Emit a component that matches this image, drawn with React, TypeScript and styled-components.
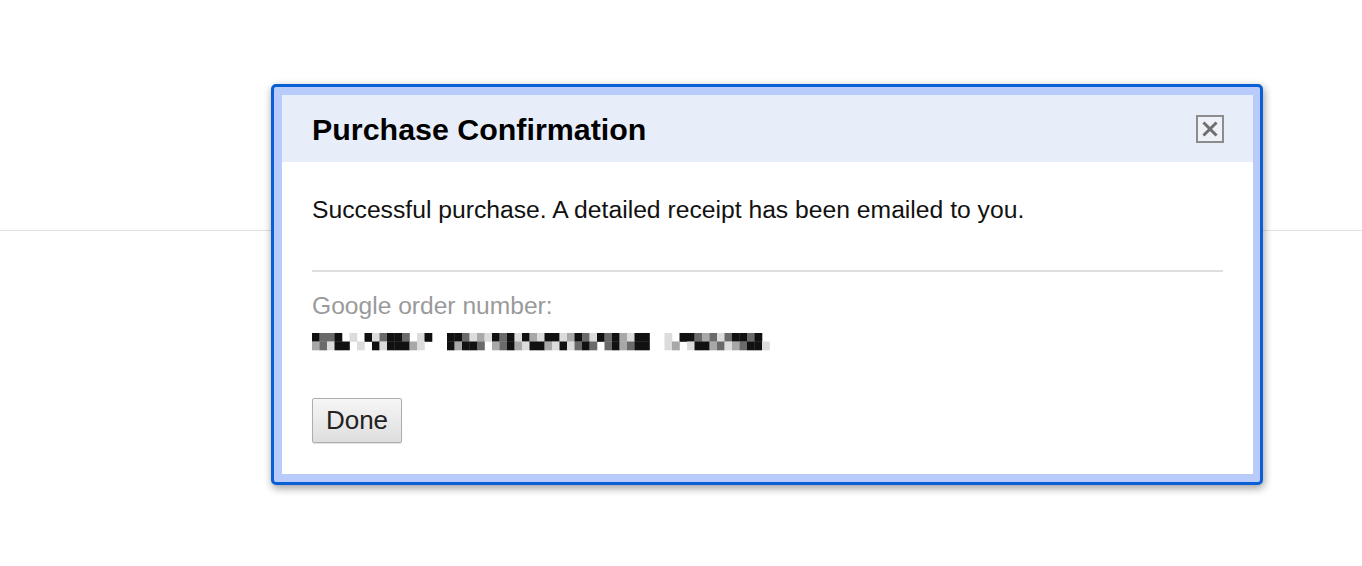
import React from "react";
import styled, { createGlobalStyle } from "styled-components";

const Global = createGlobalStyle`
  html, body { margin: 0; padding: 0; background: #ffffff; }
  body { font-family: "Liberation Sans", Arial, sans-serif; }
`;

const Page = styled.div`
  position: relative;
  width: 1362px;
  height: 566px;
  overflow: hidden;
  padding-top: 230px;
  box-sizing: border-box;
`;

const Rule = styled.div`
  height: 1px;
  background: #e2e2e2;
`;

const Dialog = styled.div`
  position: absolute;
  left: 271px;
  top: 84px;
  width: 992px;
  box-sizing: border-box;
  border: 3px solid #0b5fd6;
  border-radius: 5px;
  background: #b9cbfb;
  padding: 8px 7px 8px 8px;
  box-shadow: 1px 3px 8px rgba(0, 0, 0, 0.4);
`;

const Inner = styled.div`
  background: #ffffff;
`;

const Header = styled.div`
  height: 67px;
  background: #e8eef9;
  display: flex;
  align-items: center;
  justify-content: space-between;
  padding: 0 29px 0 30px;
`;

const Title = styled.h1`
  margin: 0;
  font-size: 30.4px;
  line-height: 34px;
  font-weight: 700;
  color: #000;
`;

const CloseBox = styled.div`
  width: 28px;
  height: 28px;
  box-sizing: border-box;
  border: 2px solid #8c8c8c;
  display: flex;
  align-items: center;
  justify-content: center;
  background: #eef1f8;
`;

const Body = styled.div`
  padding: 34px 30px 31px 30px;
  display: flex;
  flex-direction: column;
`;

const Message = styled.p`
  margin: 0;
  font-size: 24.7px;
  line-height: 28px;
  color: #111;
`;

const Divider = styled.div`
  height: 2px;
  background: #dedede;
  margin-top: 46px;
`;

const Label = styled.div`
  margin-top: 20px;
  font-size: 24.6px;
  line-height: 28px;
  color: #9a9a9a;
`;

const Redacted = styled.svg`
  display: block;
  margin-top: 13px;
`;

const DoneButton = styled.button`
  margin-top: 47px;
  align-self: flex-start;
  width: 90px;
  height: 45px;
  font-family: "Liberation Sans", Arial, sans-serif;
  font-size: 26px;
  color: #222;
  background: linear-gradient(#f6f6f6, #dedede);
  border: 1px solid #adadad;
  border-radius: 2px;
  box-shadow: 0 1px 1px rgba(0, 0, 0, 0.12);
  padding: 0;
`;

const topRow =
  "#++# . #.+##+ .#  ##+.:.#+#.#:.##.:#+.#+#:.##  . ##+:+.+##+#";
const botRow =
  ":+.## . #.###:.   #:##+ :+#:.##:.#.+#+ +#:+##  .: .##:+.:+##.";

const shade: Record<string, string | null> = {
  " ": null,
  ".": "#dcdcdc",
  ":": "#a8a8a8",
  "+": "#6a6a6a",
  "#": "#111111",
};

const CW = 7.5;
const RH = 8.5;

function RedactedLine() {
  const rows = [topRow, botRow];
  return (
    <Redacted width={458} height={18} viewBox="0 0 458 18">
      {rows.map((row, r) =>
        row.split("").map((c, i) => {
          const fill = shade[c];
          if (!fill) return null;
          return (
            <rect
              key={`${r}-${i}`}
              x={i * CW}
              y={r * RH}
              width={CW + 0.3}
              height={RH + 0.3}
              fill={fill}
            />
          );
        })
      )}
    </Redacted>
  );
}

export default function App() {
  return (
    <>
      <Global />
      <Page>
        <Rule />
        <Dialog>
          <Inner>
            <Header>
              <Title>Purchase Confirmation</Title>
              <CloseBox>
                <svg width="16" height="16" viewBox="0 0 16 16">
                  <path
                    d="M2.5 2.5 L13.5 13.5 M13.5 2.5 L2.5 13.5"
                    stroke="#6f6f6f"
                    strokeWidth="3"
                    strokeLinecap="square"
                  />
                </svg>
              </CloseBox>
            </Header>
            <Body>
              <Message>
                Successful purchase. A detailed receipt has been emailed to you.
              </Message>
              <Divider />
              <Label>Google order number:</Label>
              <RedactedLine />
              <DoneButton>Done</DoneButton>
            </Body>
          </Inner>
        </Dialog>
      </Page>
    </>
  );
}
